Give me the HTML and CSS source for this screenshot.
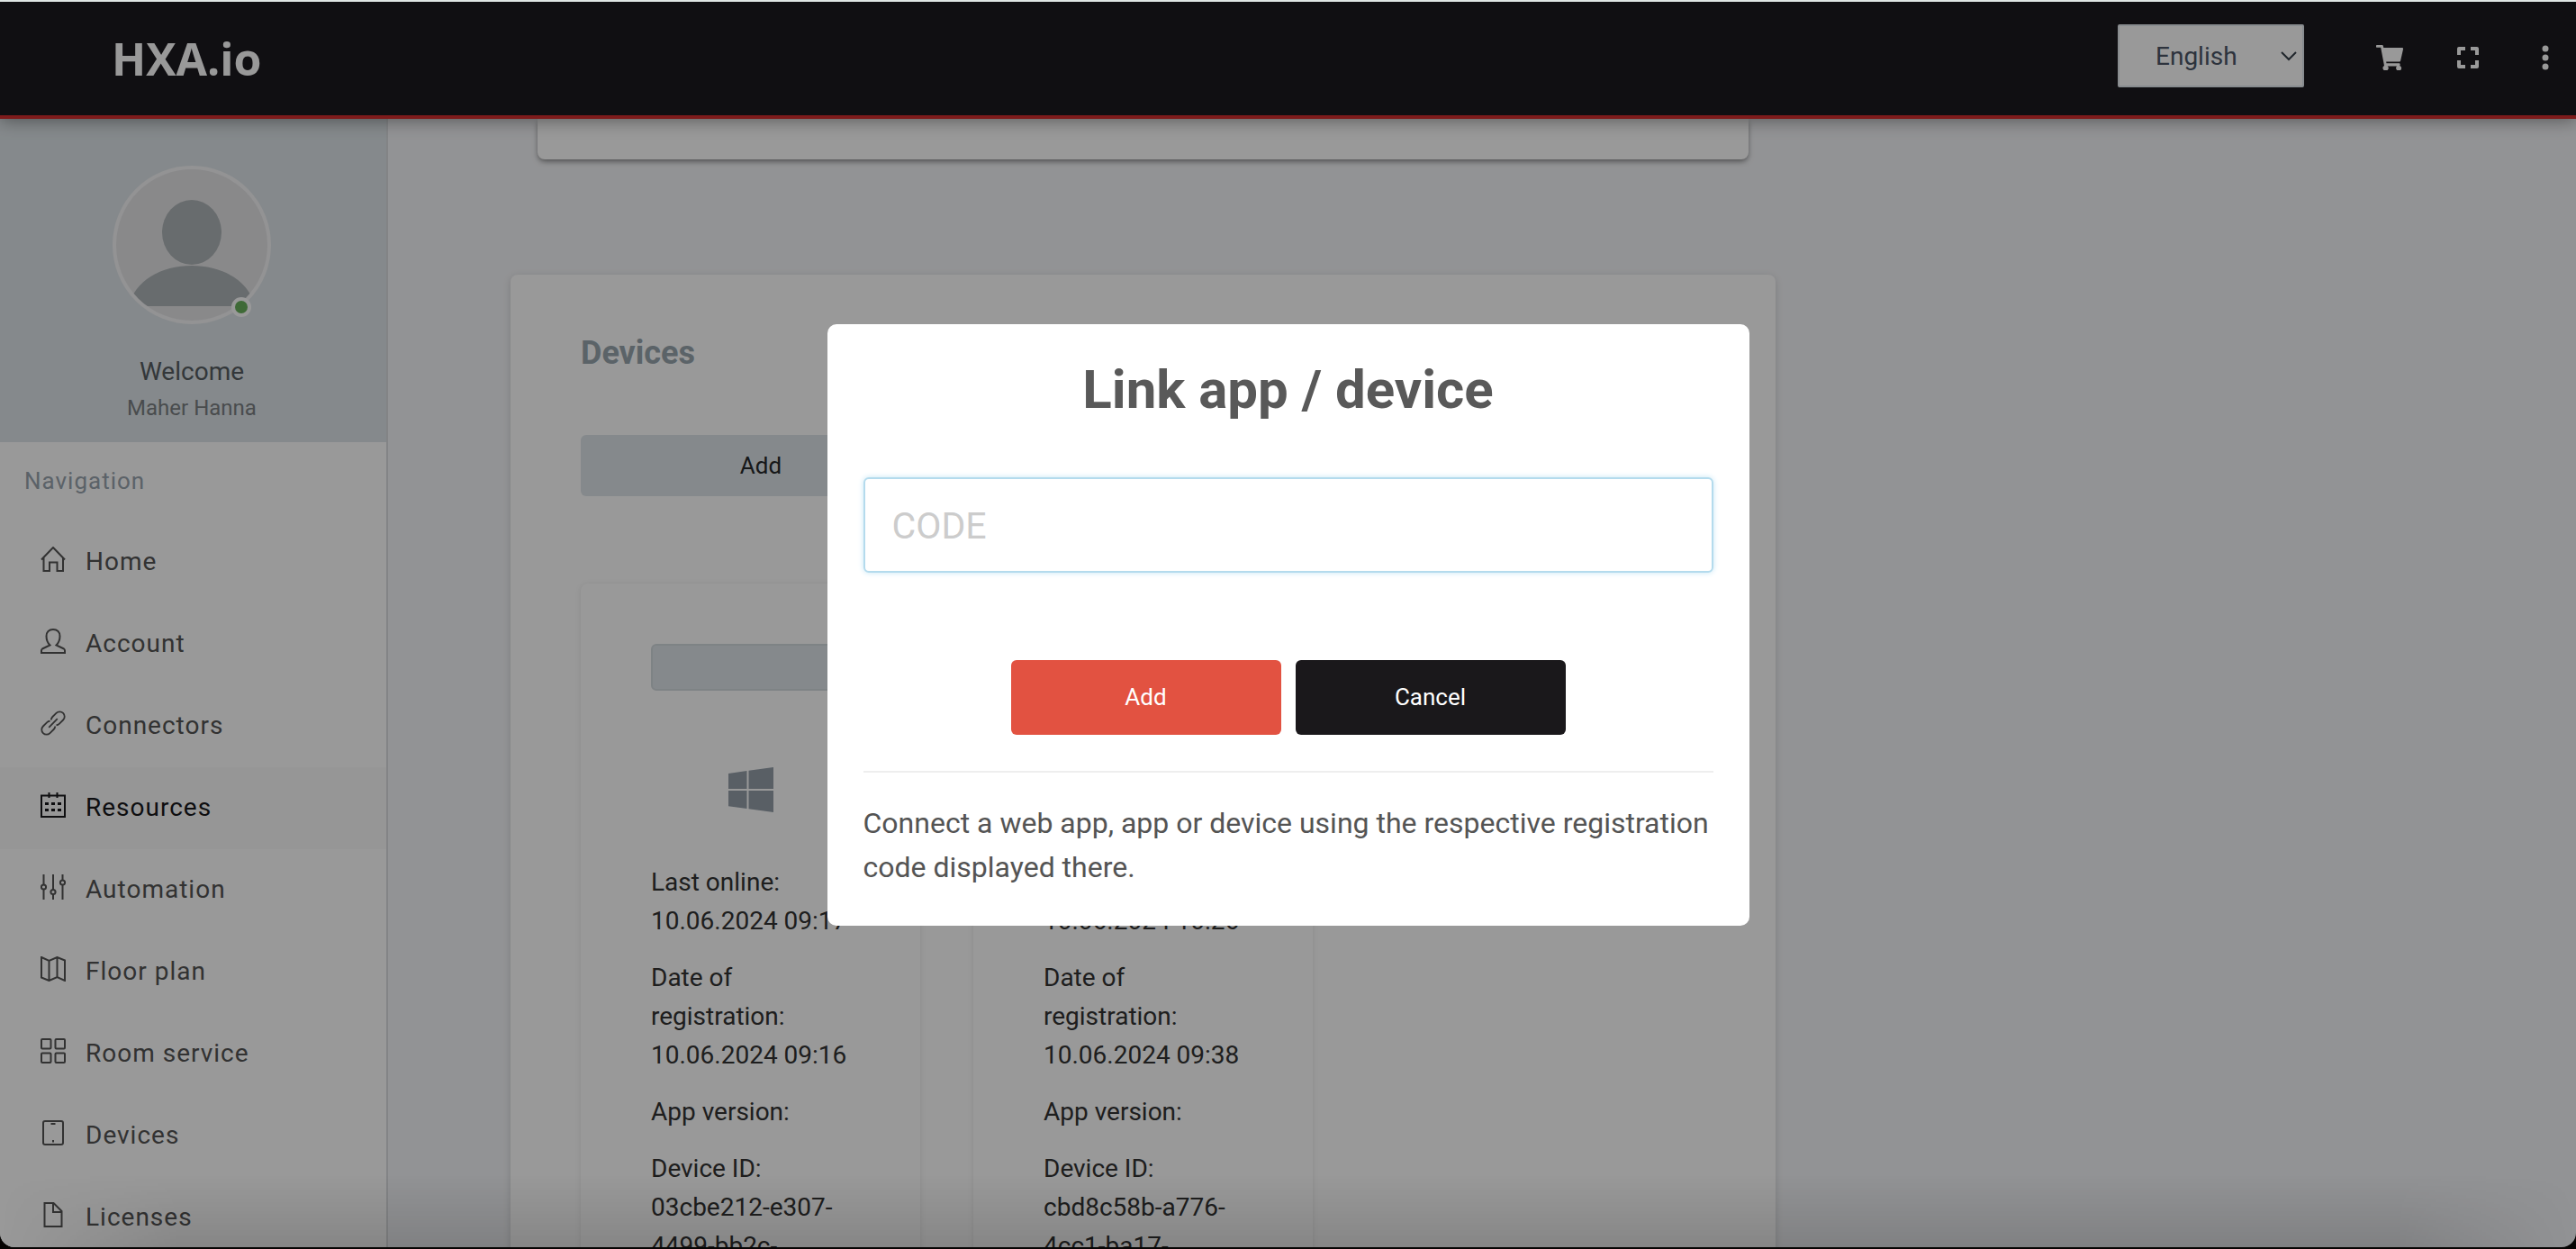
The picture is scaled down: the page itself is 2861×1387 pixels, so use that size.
FILE: index.html
```html
<!DOCTYPE html>
<html lang="en">
<head>
<meta charset="utf-8">
<title>HXA.io – Devices</title>
<link rel="stylesheet" href="styles.css">
</head>
<body>
<div class="app">
  <header class="topbar">
    <a class="logo" href="#">HXA.io</a>
    <div class="topbar-tools">
      <div class="language">
        <select class="language-select" aria-label="Language">
          <option>English</option>
          <option>Deutsch</option>
        </select>
        <svg class="language-arrow" viewBox="0 0 18 11" aria-hidden="true"><path d="M1 1l8 8 8-8" fill="none" stroke="currentColor" stroke-width="2"/></svg>
      </div>
      <button class="tool" type="button" aria-label="Cart">
        <svg viewBox="0 0 30 28" width="30" height="28"><path fill="currentColor" d="M1 0h5.500c.8 0 1.300.5 1.400 1.200L8.300 3H29c.8 0 1.300.7 1.100 1.400l-3 13c-.2.600-.7 1.100-1.400 1.100H11.200l.3 1.800h14c.8 0 1.300.7 1.100 1.400l-.3 1.200a3 3 0 1 1-3.300.600H12.700a3 3 0 1 1-3.700-.4L5.200 2.700H1C.4 2.700 0 2.300 0 1.700V1C0 .4.400 0 1 0z"/></svg>
      </button>
      <button class="tool" type="button" aria-label="Fullscreen">
        <svg viewBox="0 0 24 24" width="24" height="24"><path d="M2 9V2h7M15 2h7v7M22 15v7h-7M9 22H2v-7" fill="none" stroke="currentColor" stroke-width="4" stroke-linejoin="round"/></svg>
      </button>
      <button class="tool" type="button" aria-label="More">
        <svg viewBox="0 0 8 28" width="8" height="28"><g fill="currentColor"><circle cx="4" cy="4" r="3.500"/><circle cx="4" cy="14" r="3.500"/><circle cx="4" cy="24" r="3.500"/></g></svg>
      </button>
    </div>
  </header>

  <div class="body">
    <aside class="sidebar">
      <section class="profile">
        <div class="avatar">
          <svg class="avatar-picture" viewBox="0 0 168 168" aria-hidden="true"><ellipse cx="84" cy="70" rx="33" ry="36"/><path d="M14 152c6-28 36-45 70-45s64 17 70 45z"/></svg>
          <span class="status"></span>
        </div>
        <p class="welcome">Welcome</p>
        <p class="user">Maher Hanna</p>
      </section>
      <nav class="nav">
        <h2 class="nav-title">Navigation</h2>
        <a class="nav-item" href="#"><svg viewBox="0 0 28 28"><path d="M1 14.500L14 1l13 13.500M3.500 12.500V27H10V17.500h8.500V27H25V12.500"/></svg>Home</a>
        <a class="nav-item" href="#"><svg viewBox="0 0 28 28"><path d="M14 1c-4.500 0-7.500 3-7.500 7.500 0 4 1.500 7.500 4 10L2 22.500c-.7.400-1 1-1 2V27h26v-2.500c0-1-.3-1.600-1-2l-8.500-4c2.500-2.500 4-6 4-10C21.500 4 18.500 1 14 1z"/></svg>Account</a>
        <a class="nav-item" href="#"><svg viewBox="0 0 28 28"><g transform="rotate(-45 14 14)"><path d="M15 9.500C16 8.500 17.500 8 19 8h6.500a6 6 0 0 1 0 12H19c-1.500 0-3-.5-4-1.500M13 9.500C12 8.500 10.500 8 9 8H2.500a6 6 0 0 0 0 12H9c1.500 0 3-.5 4-1.500M6.500 14h15" transform="translate(1.400 1.400) scale(.9)"/></g></svg>Connectors</a>
        <a class="nav-item nav-item-active" href="#" aria-current="page"><svg viewBox="0 0 28 28"><path d="M1 3.500h26V27H1zM9.500 0v6M18.500 0v6"/><path class="dots" d="M5 11h4v3H5zM12 11h4v3h-4zM19 11h4v3h-4zM5 18h4v3H5zM12 18h4v3h-4zM19 18h4v3h-4z"/></svg>Resources</a>
        <a class="nav-item" href="#"><svg viewBox="0 0 28 28"><path d="M3.500 0v11.500M3.500 16.500V28M14 0v17M14 22v6M24.500 0v6.500M24.500 11.500V28"/><circle cx="3.500" cy="14" r="2.600"/><circle cx="14" cy="19.500" r="2.600"/><circle cx="24.500" cy="9" r="2.600"/></svg>Automation</a>
        <a class="nav-item" href="#"><svg viewBox="0 0 28 28"><path d="M1 1l8.500 4L18.500 1 27 4.500V27l-8.500-4-9 4L1 23.500zM9.500 5v22M18.500 1v22"/></svg>Floor plan</a>
        <a class="nav-item" href="#"><svg viewBox="0 0 28 28"><rect x="1" y="1" width="10.500" height="10.500" rx="1"/><rect x="16.500" y="1" width="10.500" height="10.500" rx="1"/><rect x="1" y="16.500" width="10.500" height="10.500" rx="1"/><rect x="16.500" y="16.500" width="10.500" height="10.500" rx="1"/></svg>Room service</a>
        <a class="nav-item" href="#"><svg viewBox="0 0 28 28"><rect x="3" y="1" width="22" height="26" rx="2"/><path d="M11.500 4h5M14 22v2.500"/></svg>Devices</a>
        <a class="nav-item" href="#"><svg viewBox="0 0 28 28"><path d="M4.500 1H14.500L23.500 10V27H4.500zM14 1v10h9.500"/></svg>Licenses</a>
      </nav>
    </aside>

    <main class="content">
      <section class="card card-previous"></section>
      <section class="card devices">
        <h1 class="devices-title">Devices</h1>
        <button class="button-soft" type="button">Add</button>
        <div class="device-list">
          <article class="device">
            <div class="device-name"></div>
            <svg class="device-logo" viewBox="0 0 50 50" role="img" aria-label="Windows"><path d="M0 7l20.500-3v20H0zM22.500 3.700L50 0v24H22.500zM0 26h20.500v20L0 43.200zM22.500 26H50v24l-27.500-3.700z"/></svg>
            <p>Last online:<br>10.06.2024 09:17</p>
            <p>Date of registration:<br>10.06.2024 09:16</p>
            <p>App version:</p>
            <p>Device ID:<br>03cbe212-e307-4499-bb2c-</p>
          </article>
          <article class="device">
            <div class="device-name"></div>
            <svg class="device-logo" viewBox="0 0 50 50" role="img" aria-label="Windows"><path d="M0 7l20.500-3v20H0zM22.500 3.700L50 0v24H22.500zM0 26h20.500v20L0 43.200zM22.500 26H50v24l-27.500-3.700z"/></svg>
            <p>Last online:<br>10.06.2024 10:26</p>
            <p>Date of registration:<br>10.06.2024 09:38</p>
            <p>App version:</p>
            <p>Device ID:<br>cbd8c58b-a776-4cc1-ba17-</p>
          </article>
        </div>
      </section>
    </main>
  </div>
</div>

<div class="overlay">
  <form class="modal" role="dialog" aria-modal="true" aria-labelledby="modal-title">
    <h2 class="modal-title" id="modal-title">Link app / device</h2>
    <input class="modal-input" type="text" placeholder="CODE" aria-label="Code">
    <div class="modal-actions">
      <button class="button button-add" type="button">Add</button>
      <button class="button button-cancel" type="button">Cancel</button>
    </div>
    <p class="modal-note">Connect a web app, app or device using the respective registration code displayed there.</p>
  </form>
</div>
<div class="edge edge-top"></div>
<div class="edge edge-bottom"></div>
</body>
</html>
```

FILE: styles.css
```css
* {
  box-sizing: border-box;
}

body {
  margin: 0;
  height: 100vh;
  overflow: hidden;
  font-family: Roboto, "Liberation Sans", sans-serif;
  font-size: 28px;
  color: #36404a;
  background: #0a0805;
}

h1, h2, p {
  margin: 0;
}

button, input, select {
  font: inherit;
}

a {
  color: inherit;
  text-decoration: none;
}

.app {
  display: flex;
  flex-direction: column;
  height: calc(100vh - 2px);
  overflow: hidden;
  background: #f4f5f8;
  border-radius: 0 0 16px 16px;
}

/* Top bar */
.topbar {
  position: relative;
  z-index: 1;
  flex: none;
  display: flex;
  align-items: center;
  justify-content: space-between;
  height: 132px;
  padding: 0 26px 4px 124px;
  background: #1c191e;
  border-bottom: 4px solid #d22d2d;
  box-shadow: 0 2px 18px rgba(0, 0, 0, .4);
}

.logo {
  padding-top: 6px;
  font-family: "Open Sans", "Noto Sans", sans-serif;
  font-size: 50px;
  font-weight: 700;
  color: #fff;
}

.topbar-tools {
  display: flex;
  align-items: center;
}

.language {
  position: relative;
  margin-right: 80px;
}

.language-select {
  display: block;
  width: 207px;
  height: 70px;
  padding: 0 40px;
  appearance: none;
  color: #4c5667;
  background: #fff;
  border: 2px solid #e3eaef;
  border-radius: 2px;
}

.language-arrow {
  position: absolute;
  right: 8px;
  top: 30px;
  width: 18px;
  height: 11px;
  pointer-events: none;
}

.tool {
  display: flex;
  padding: 4px 0 0;
  margin-right: 60px;
  color: #fff;
  background: none;
  border: 0;
}

.tool + .tool + .tool {
  margin: 0 4px 0 10px;
}

/* Sidebar */
.body {
  flex: 1;
  display: flex;
  min-height: 0;
}

.sidebar {
  flex: none;
  width: 431px;
  overflow: hidden;
  background: #fff;
  border-right: 2px solid #dadde0;
}

.profile {
  display: flex;
  flex-direction: column;
  align-items: center;
  height: 359px;
  padding: 52px 3px 0 0;
  background: #dee5e9;
}

.avatar {
  position: relative;
  width: 176px;
  height: 176px;
  margin-bottom: 32px;
}

.avatar-picture {
  width: 100%;
  height: 100%;
  background: #e5e5e7;
  border: 4px solid #f5f5f7;
  border-radius: 50%;
  fill: #aeb4b7;
}

.status {
  position: absolute;
  right: 22px;
  bottom: 8px;
  width: 22px;
  height: 22px;
  background: #69b15d;
  border: 4px solid #fff;
  border-radius: 50%;
}

.welcome {
  line-height: 42px;
  color: #565d62;
}

.user {
  font-size: 24px;
  line-height: 38px;
  color: #7b7f83;
}

.nav-title {
  padding: 0 27px;
  font-size: 26px;
  font-weight: 400;
  line-height: 86px;
  margin-bottom: 2px;
  letter-spacing: 1px;
  color: #98a3ad;
}

.nav-item {
  display: flex;
  align-items: center;
  gap: 22px;
  height: 91px;
  padding: 0 45px 2px;
  letter-spacing: 1px;
  color: #545454;
}

.nav-item svg {
  flex: none;
  width: 28px;
  height: 28px;
  margin-bottom: 6px;
  fill: none;
  stroke: currentColor;
  stroke-width: 2;
}

.nav-item .dots {
  fill: currentColor;
  stroke: none;
}

.nav-item-active {
  color: #18181b;
  background: #fbfbfb;
}

/* Content */
.content {
  flex: 1;
  display: flex;
  flex-direction: column;
  padding: 0 136px;
}

.card {
  flex: none;
  background: #fff;
  border-radius: 8px;
}

.card-previous {
  width: 1345px;
  height: 45px;
  margin: 0 30px 128px;
  border-radius: 0 0 8px 8px;
  box-shadow: 0 3px 6px -1px rgba(0, 0, 0, .5);
}

.devices {
  width: 1405px;
  padding: 61px 78px;
  box-shadow: 0 2px 8px rgba(0, 0, 0, .15);
}

.devices-title {
  margin-bottom: 65px;
  font-size: 36px;
  font-weight: 700;
  line-height: 52px;
  color: #98a6ad;
}

.button-soft {
  display: block;
  width: 400px;
  height: 68px;
  margin-bottom: 97px;
  font-size: 26px;
  color: #26282b;
  background: #dee5e9;
  border: 0;
  border-radius: 6px;
}

.device-list {
  display: flex;
  gap: 59px;
}

.device {
  width: 377px;
  padding: 67px 78px;
  line-height: 43px;
  color: #323232;
  border-radius: 8px;
  box-shadow: 0 1px 6px rgba(0, 0, 0, .1);
}

.device p {
  margin-bottom: 20px;
}

.device-name {
  height: 52px;
  background: #dee5e9;
  border: 2px solid #d3dade;
  border-radius: 6px;
}

.device-logo {
  display: block;
  width: 50px;
  height: 50px;
  margin: 85px auto 56px;
  fill: #949fa9;
}

/* Modal */
.overlay {
  position: fixed;
  inset: 0;
  z-index: 2;
  display: flex;
  align-items: center;
  justify-content: center;
  background: rgba(0, 0, 0, .4);
}

.modal {
  width: 1024px;
  padding: 40px;
  background: #fff;
  border-radius: 10px;
  color: #545454;
}

.modal-title {
  margin-bottom: 64px;
  font-size: 60px;
  font-weight: 700;
  line-height: 66px;
  text-align: center;
  color: #595959;
}

.modal-input {
  display: block;
  width: 100%;
  height: 106px;
  padding: 2px 30px 0;
  font-size: 41px;
  color: #545454;
  border: 2px solid #b4dbed;
  border-radius: 6px;
  outline: 0;
  box-shadow: 0 0 6px #c4e6f5;
}

.modal-input::placeholder {
  color: #ccc;
}

.modal-actions {
  display: flex;
  justify-content: center;
  gap: 16px;
  margin: 97px 0 40px;
}

.button {
  width: 300px;
  height: 83px;
  font-size: 26px;
  color: #fff;
  border: 0;
  border-radius: 6px;
}

.button-add {
  background: #e25241;
}

.button-cancel {
  background: #1a181b;
}

.modal-note {
  padding-top: 32px;
  border-top: 2px solid #eee;
  font-size: 32px;
  line-height: 49px;
}

/* Window edges */
.edge {
  position: fixed;
  left: 0;
  right: 0;
  z-index: 3;
  pointer-events: none;
}

.edge-top {
  top: 0;
  height: 2px;
  background: #dfe6e4;
}

.edge-bottom {
  bottom: 2px;
  height: 80px;
  background: linear-gradient(rgba(0, 0, 0, 0), rgba(0, 0, 0, .12));
  mask-image: linear-gradient(90deg, transparent, #000 200px, #000 calc(100% - 200px), transparent);
}
```
